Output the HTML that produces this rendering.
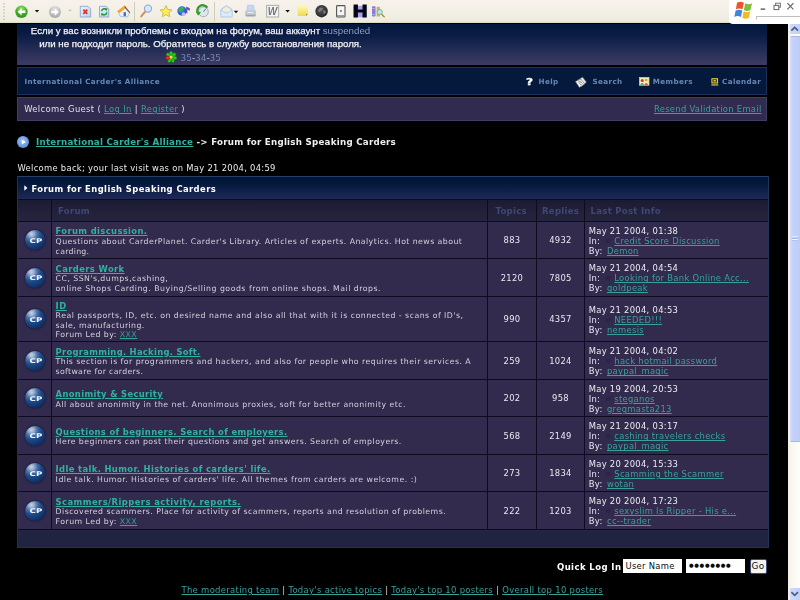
<!DOCTYPE html>
<html><head><meta charset="utf-8"><title>International Carder's Alliance</title>
<style>
html,body{margin:0;padding:0;background:#000;}
body{width:800px;height:600px;position:relative;overflow:hidden;font-family:"DejaVu Sans","Liberation Sans",sans-serif;font-size:8.4px;letter-spacing:0.3px;color:#e6e6ee;}
div,span,a,svg{position:absolute;white-space:nowrap;}
.i{position:static;}
a{color:#38a29a;text-decoration:underline;}
#tbi,#hdr>*,#nav>*,#wel>*,#crumb,#wb,#ttl>*,.ht,.t,.d,.n,.l,.cp,#ql,#foot,.bl{filter:blur(0.32px);}
/* toolbar */
#tb{left:0;top:0;width:800px;height:23px;background:linear-gradient(#f7f1eb,#f4f0e7 40%,#f0efe3 72%,#ecebdc);border-bottom:1px solid #dddccb;box-sizing:border-box;}
#tbw{left:729px;top:0;width:71px;height:24px;background:#fff;border-bottom-left-radius:4px;}
/* header */
#hdr{left:17px;top:24px;width:750px;height:41px;background:linear-gradient(#04173b,#0b1c45 28%,#1b2850 52%,#2b3058 72%,#35365f 87%,#3b3b63);}
#hdr div{left:0;width:367px;letter-spacing:0;text-align:center;font-family:"Liberation Sans",sans-serif;font-size:9.7px;color:#f4f4f8;-webkit-text-stroke:0.25px #f4f4f8;}
#nav{left:17px;top:67px;width:748px;height:26px;background:#04193c;border:1px solid #1a3058;}
#wel{left:17px;top:97px;width:748px;height:21.5px;background:#302b4f;border:1px solid #413d64;}
.nb{font-weight:bold;font-size:7.2px;letter-spacing:0.38px;color:#6a86b2;top:9.4px;}
/* table */
#tbl{left:17px;top:176px;width:752px;height:372px;background:#0c0b20;box-shadow:inset 0 0 0 1px #1d3459;}
#ttl{left:1px;top:0;width:750px;height:23px;background:linear-gradient(#001737 0,#021838 20%,#0c1c44 50%,#18244e 80%,#1d2a56 100%);border-top:1px solid #2a3c68;box-sizing:border-box;}
.c{background:#322b4d;}
.h{background:linear-gradient(#1a1c33,#231f39 50%,#24253f);}
#strip{background:#202440;}
.ht{font-weight:bold;color:#3d4875;font-size:8.6px;letter-spacing:0.25px;}
.t{font-weight:bold;font-size:8.4px;letter-spacing:0.37px;color:#2fb3a0;left:56px;}
.t a{position:static;color:#2fb3a0;}
.d{font-size:7.8px;letter-spacing:0.44px;color:#d2d2dc;left:56px;}
.d a{position:static;}
.n{font-size:8.4px;letter-spacing:0.3px;color:#e8e8f0;text-align:center;}
.l{left:588.5px;font-size:8.4px;letter-spacing:0.3px;color:#ececf2;}
.l a{position:static;}
.l i{font-style:normal;color:#4a4578;}
.cp{width:20px;height:20px;border-radius:50%;background:radial-gradient(circle at 32% 20%,#c6d2e6 0,#9db1d1 12%,#4d74aa 27%,#1d4a88 45%,#133b75 63%,#0b2858 84%,#081c44 100%);box-shadow:0 0 1.5px 0.5px #16183a;}
.cp span{left:1px;top:6.3px;width:20px;text-align:center;font-family:"DejaVu Sans",sans-serif;font-weight:bold;font-size:6.4px;line-height:8px;color:#f4f6fa;letter-spacing:0;transform:scaleX(1.36);}
</style></head><body>
<div id="tb"></div>
<div id="tbw"></div>
<svg id="tbi" style="left:0;top:0" width="800" height="24" viewBox="0 0 800 24">
<defs>
<radialGradient id="gG" cx="0.5" cy="0.25" r="0.8"><stop offset="0" stop-color="#9be07a"/><stop offset="0.5" stop-color="#45b02c"/><stop offset="1" stop-color="#2c8a1c"/></radialGradient>
<radialGradient id="gF" cx="0.5" cy="0.25" r="0.8"><stop offset="0" stop-color="#e4e4e4"/><stop offset="0.6" stop-color="#bcbcbc"/><stop offset="1" stop-color="#a4a4a4"/></radialGradient>
<linearGradient id="gP" x1="0" y1="0" x2="1" y2="1"><stop offset="0" stop-color="#eef5fe"/><stop offset="1" stop-color="#b9d0f2"/></linearGradient>
<linearGradient id="gY" x1="0" y1="0" x2="0" y2="1"><stop offset="0" stop-color="#fdf8b0"/><stop offset="1" stop-color="#f1d84e"/></linearGradient>
<radialGradient id="gB" cx="0.4" cy="0.35" r="0.7"><stop offset="0" stop-color="#4aa0f0"/><stop offset="1" stop-color="#1448b0"/></radialGradient>
<radialGradient id="gD" cx="0.45" cy="0.4" r="0.7"><stop offset="0" stop-color="#5a5a5a"/><stop offset="1" stop-color="#1c1c1c"/></radialGradient>
</defs>
<!-- gripper -->
<g fill="#b9b6a8"><rect x="3.3" y="3.2" width="1.4" height="1.2"/><rect x="3.3" y="6.3" width="1.4" height="1.2"/><rect x="3.3" y="9.4" width="1.4" height="1.2"/><rect x="3.3" y="12.5" width="1.4" height="1.2"/><rect x="3.3" y="15.6" width="1.4" height="1.2"/><rect x="3.3" y="18.7" width="1.4" height="1.2"/></g>
<!-- back -->
<circle cx="21.5" cy="11.8" r="6.2" fill="url(#gG)"/>
<path d="M17.6 11.8 L21.6 8 L21.6 10.5 L25.4 10.5 L25.4 13.1 L21.6 13.1 L21.6 15.6 Z" fill="#fff"/>
<path d="M34.8 10 L39.2 10 L37 12.6 Z" fill="#111"/>
<!-- forward -->
<circle cx="55" cy="12" r="6" fill="url(#gF)"/>
<path d="M58.8 12 L54.8 8.3 L54.8 10.8 L51.2 10.8 L51.2 13.2 L54.8 13.2 L54.8 15.7 Z" fill="#fff"/>
<path d="M68.4 9.8 L71.6 9.8 L70 11.6 Z" fill="#b4b2aa"/>
<!-- stop -->
<path d="M80.3 6.3 L88 6.3 L90.7 9 L90.7 17 L80.3 17 Z" fill="url(#gP)" stroke="#8fa6cc" stroke-width="0.9"/>
<path d="M83.3 9.6 L87.3 13.8 M87.3 9.6 L83.3 13.8" stroke="#d93a22" stroke-width="1.9" fill="none"/>
<!-- refresh -->
<path d="M99.5 6.3 L106.2 6.3 L108.8 9 L108.8 17 L99.5 17 Z" fill="url(#gP)" stroke="#8fa6cc" stroke-width="0.9"/>
<path d="M101.6 11.2 A2.7 2.7 0 0 1 106 9.4" fill="none" stroke="#1f9a30" stroke-width="1.5"/>
<path d="M104.8 8.2 L107.6 8.4 L106.6 11.2 Z" fill="#1f9a30"/>
<path d="M106.8 12.4 A2.7 2.7 0 0 1 102.4 14.2" fill="none" stroke="#1f9a30" stroke-width="1.5"/>
<path d="M103.6 15.4 L100.8 15.2 L101.8 12.4 Z" fill="#1f9a30"/>
<!-- home -->
<path d="M118.3 11.5 L120 16.3 L127.6 16.9 L129.6 12.6 L125.4 7.8 Z" fill="#e9f0fa" stroke="#9cb4d8" stroke-width="0.7"/>
<path d="M117 11.2 L124.6 5.4 L126.3 7.6 L119.2 13.2 Z" fill="#f3a534"/>
<path d="M124.6 5.4 L130.4 12.4 L129.2 13 L124.8 7.8 Z" fill="#8a5a3a"/>
<rect x="123.6" y="12.2" width="2.3" height="4" fill="#4a68b8"/>
<!-- sep -->
<rect x="134" y="2" width="1" height="19.5" fill="#d0cdbf"/>
<!-- search -->
<path d="M145.4 11.4 L141.2 16.4" stroke="#d98a4e" stroke-width="1.9" stroke-linecap="round"/>
<circle cx="148" cy="8.6" r="3.6" fill="#d6e8fb" stroke="#8daad2" stroke-width="1.1"/>
<!-- star -->
<path d="M166 5.6 L167.8 9.4 L172 9.9 L168.9 12.7 L169.8 16.8 L166 14.7 L162.2 16.8 L163.1 12.7 L160 9.9 L164.2 9.4 Z" fill="#f8ea62" stroke="#d2b23a" stroke-width="0.8"/>
<!-- media -->
<path d="M186.2 12.8 L186.2 6.4 L189.8 8.2 L189.8 10.8 L187.4 9.6 L187.4 13.4 Z" fill="#6a48b4"/>
<circle cx="182" cy="11" r="4.7" fill="url(#gB)"/>
<path d="M179 9 Q181 6.6 183.6 7.2 Q184.4 9.4 182.4 10.6 Q180.6 12.8 179.4 11.6 Z" fill="#38b83a"/>
<circle cx="183.6" cy="14.2" r="1.9" fill="#c9b8f2"/>
<!-- history -->
<circle cx="203.4" cy="11.8" r="4.9" fill="#dfe7f0" stroke="#9aa8b8" stroke-width="0.9"/>
<path d="M203.4 11.8 L206 8.6" stroke="#5a6a88" stroke-width="0.9"/>
<path d="M198.2 13.8 A5.5 5.5 0 0 1 207.4 7.6" fill="none" stroke="#379a2c" stroke-width="2.3"/>
<path d="M196 11.4 L201 12 L198.2 15.8 Z" fill="#379a2c"/>
<!-- sep -->
<rect x="214" y="2" width="1" height="19.5" fill="#d0cdbf"/>
<!-- mail -->
<path d="M221 9.4 L226.4 5.6 L232 9.4 L232 16.8 L221 16.8 Z" fill="#c6dcf8" stroke="#9ab8e2" stroke-width="0.7"/>
<path d="M222.6 9.2 L226.4 6.6 L230.4 9.2 L230.4 11.4 L222.6 11.4 Z" fill="#f6eed2"/>
<path d="M221 10.2 L226.5 13.6 L232 10.2 L232 16.8 L221 16.8 Z" fill="#deebfc" stroke="#a6c2e8" stroke-width="0.5"/>
<path d="M233.8 10.8 L238.2 10.8 L236 13.2 Z" fill="#111"/>
<!-- print -->
<path d="M247.6 5.2 L253.6 5.2 L254.4 10.6 L246.8 10.6 Z" fill="#c2d8f4" stroke="#a4bce0" stroke-width="0.5"/>
<path d="M245.4 10.6 L255.8 10.6 L256.2 14.6 L245 14.6 Z" fill="#c3c7cf"/>
<path d="M245 14.6 L256.2 14.6 L255 16.6 L246.2 16.6 Z" fill="#9ea4ae"/>
<rect x="247.6" y="12" width="5.8" height="1" fill="#eef1f4"/>
<!-- word -->
<rect x="266.6" y="5.4" width="12" height="11.6" fill="#f4f4f4" stroke="#b2b2b2" stroke-width="1.1"/>
<text x="272.6" y="14.8" text-anchor="middle" font-family="Liberation Sans, sans-serif" font-weight="bold" font-style="italic" font-size="10" fill="#777">W</text>
<path d="M285.4 10 L289.8 10 L287.6 12.4 Z" fill="#111"/>
<!-- note -->
<path d="M297.6 6 L308 6 L308 14 L306 16 L297.6 16 Z" fill="url(#gY)"/>
<path d="M308 14 L306 16 L306 14 Z" fill="#b2941e"/>
<!-- dark globe -->
<circle cx="321.6" cy="11.2" r="6.2" fill="url(#gD)"/>
<path d="M318.4 9.4 Q320.6 6.8 323 8 Q322.6 10.4 320.6 11 Q319 12.6 318.2 11.4 Z M323.4 10.4 Q325.6 10 325.8 12.2 Q324.8 14.4 323.4 13.4 Z" fill="#7c7c7c"/>
<!-- pda -->
<rect x="336.6" y="5.6" width="8.4" height="11.4" rx="0.8" fill="#f6f6f6" stroke="#555" stroke-width="1.1"/>
<rect x="337" y="15.2" width="7.6" height="1.4" fill="#888"/>
<rect x="340.2" y="10.2" width="1.4" height="1.6" fill="#444"/>
<!-- H -->
<rect x="353.4" y="5.8" width="11.8" height="11.4" fill="#aaa2e4"/>
<text x="0" y="0" transform="translate(353.1 17.2) scale(1.28 1)" font-family="Liberation Sans, sans-serif" font-weight="bold" font-size="15.6" fill="#06061a" stroke="#06061a" stroke-width="1.1">H</text>
<!-- research -->
<rect x="372" y="6.2" width="3.6" height="10.4" rx="0.8" fill="#8a7ae2"/>
<rect x="372" y="8" width="3.6" height="0.8" fill="#b8aef2"/><rect x="372" y="14" width="3.6" height="0.8" fill="#b8aef2"/>
<rect x="376.6" y="6.8" width="3.4" height="9.8" rx="0.6" fill="#c9b64e"/>
<path d="M381.6 14.2 L384.2 16.8" stroke="#b98a3a" stroke-width="1.5" stroke-linecap="round"/>
<circle cx="379.8" cy="12" r="2.6" fill="#a8ecf2" stroke="#8a9a6a" stroke-width="0.7"/>
<!-- window controls -->
<g transform="translate(735.2 0.4) scale(1.14 1.06)">
<path d="M1.6 2.2 Q4.6 0.4 7.6 2.2 L6.4 8.4 Q3.6 6.8 0.6 8.4 Z" fill="#e8562a"/>
<path d="M8.8 2.8 Q11.8 4.6 14.8 2.8 L13.4 9 Q10.6 10.8 7.6 9 Z" fill="#7bbf3a"/>
<path d="M0.4 9.6 Q3.4 8 6.2 9.6 L5 15.6 Q2.2 14 -0.8 15.6 Z" fill="#3f86d8"/>
<path d="M7.4 10.2 Q10.4 12 13.2 10.2 L12 16.4 Q9.2 18 6.2 16.4 Z" fill="#f4b924"/>
</g>
<rect x="760.6" y="8.4" width="4.6" height="1.5" fill="#666"/>
<rect x="775.6" y="3.2" width="4.8" height="4" fill="none" stroke="#777" stroke-width="1"/>
<rect x="774" y="5.4" width="4.8" height="4.2" fill="#fff" stroke="#666" stroke-width="1"/>
<path d="M787.4 3.2 L793.4 9.4 M793.4 3.2 L787.4 9.4" stroke="#666" stroke-width="1.2"/>
<rect x="756" y="16" width="44" height="0.9" fill="#b8b8b8"/>
<rect x="756" y="16" width="0.9" height="3.4" fill="#b8b8b8"/>
</svg>

<div id="hdr">
<div style="top:1.1px">Если у вас возникли проблемы с входом на форум, ваш аккаунт <span class="i" style="color:#8a9cc0;-webkit-text-stroke:0">suspended</span></div>
<div style="top:13.5px">или не подходит пароль. Обратитесь в службу восстановления пароля.</div>
<span style="left:163.6px;top:29.1px;font-family:'DejaVu Sans',sans-serif;font-size:8.9px;letter-spacing:0;color:#7088b0">35<span class="i" style="color:#c8d0e0">-</span>34<span class="i" style="color:#c8d0e0">-</span>35</span>
<svg style="left:148.4px;top:27.4px" width="12.6" height="12.6" viewBox="0 0 12 12"><g transform="translate(5.8 5.8)"><g fill="#2fc42c" stroke="#0f7a12" stroke-width="0.5"><ellipse cx="0" cy="-3.3" rx="1.7" ry="2.3"/><ellipse cx="0" cy="-3.3" rx="1.7" ry="2.3" transform="rotate(51.4)"/><ellipse cx="0" cy="-3.3" rx="1.7" ry="2.3" transform="rotate(102.8)"/><ellipse cx="0" cy="-3.3" rx="1.7" ry="2.3" transform="rotate(154.3)"/><ellipse cx="0" cy="-3.3" rx="1.7" ry="2.3" transform="rotate(205.7)"/><ellipse cx="0" cy="-3.3" rx="1.7" ry="2.3" transform="rotate(308.6)"/></g><ellipse cx="0" cy="-3.3" rx="1.7" ry="2.3" transform="rotate(257.1)" fill="#e03020" stroke="#801010" stroke-width="0.5"/><circle r="1.5" fill="#f4e23a"/></g></svg>
</div>

<div id="nav">
<span class="nb" style="left:6.5px">International Carder's Alliance</span>
<span class="nb" style="left:520.5px">Help</span>
<span class="nb" style="left:574.5px">Search</span>
<span class="nb" style="left:634.8px">Members</span>
<span class="nb" style="left:704px">Calendar</span>
<span style="left:509.2px;top:8.6px;font-family:'DejaVu Sans',sans-serif;font-weight:bold;font-size:9px;letter-spacing:0;color:#fff;transform:scaleX(1.35);-webkit-text-stroke:0.3px #fff">?</span>
<svg style="left:556px;top:8px" width="14" height="13" viewBox="0 0 14 13"><path d="M3.2 4.4 L8.6 1.2 L12.4 6.2 L7.4 10.4 Z" fill="#e8e8ee" stroke="#777" stroke-width="0.5"/><path d="M1.4 5.4 L7 3.2 L10.6 8 L5.4 11.4 Z" fill="#fafafa" stroke="#666" stroke-width="0.6"/><path d="M4 6.2 L7 5 M4.8 7.6 L8 6.2 M5.8 9 L8.8 7.6" stroke="#555" stroke-width="0.6"/></svg>
<svg style="left:620.6px;top:9.4px" width="11" height="9" viewBox="0 0 11 9"><rect x="0.4" y="0.4" width="9.6" height="7.8" fill="#f2eeb4" stroke="#c8cc8a" stroke-width="0.8"/><circle cx="3.2" cy="3.4" r="1.5" fill="#d83a2a"/><path d="M1.2 7.8 Q3.2 4.4 5.2 7.8 Z" fill="#2a9a96"/><circle cx="7.2" cy="3" r="1.3" fill="#d8a038"/><path d="M5.4 7.8 Q7.2 4 9.2 7.8 Z" fill="#d83a2a"/></svg>
<svg style="left:692.6px;top:9.6px" width="8" height="8.4" viewBox="0 0 9 9"><rect x="1" y="0.6" width="6.4" height="4.8" fill="#3a3a20" stroke="#f0dc4a" stroke-width="1.1"/><rect x="3" y="2.2" width="2.4" height="1.6" fill="#f0dc4a"/><rect x="0.4" y="7" width="7.8" height="1.2" fill="#f0dc4a"/></svg>
</div>

<div id="wel">
<span style="left:6.2px;top:6.1px;letter-spacing:0.36px;color:#e0e0ea">Welcome Guest ( <a class="i" href="#">Log In</a> | <a class="i" href="#">Register</a> )</span>
<a href="#" style="left:636px;top:6.1px">Resend Validation Email</a>
</div>

<div id="crumb" style="left:36px;top:136.9px;font-weight:bold;font-size:8.7px;letter-spacing:0.25px;color:#f0f0f0"><a class="i" href="#" style="color:#2fb3a0">International Carder's Alliance</a> -&gt; Forum for English Speaking Carders</div>
<div style="left:17px;top:135.5px;width:12px;height:12px;border-radius:50%;background:radial-gradient(circle at 45% 40%,#9fc0f2,#6a98dc 60%,#4a78c4)"><svg style="left:3.6px;top:3px" width="6" height="6" viewBox="0 0 6 6"><path d="M0.8 0.4 L5 3 L0.8 5.6 Z" fill="#fff"/></svg></div>

<div id="wb" style="left:17.5px;top:162.9px;color:#ececf0">Welcome back; your last visit was on May 21 2004, 04:59</div>
<div id="tbl">
<div id="ttl"><svg style="left:5.6px;top:8.4px" width="4" height="6" viewBox="0 0 4 6"><path d="M0.3 0.2 L3.4 3 L0.3 5.8 Z" fill="#fff"/></svg><span style="left:13.5px;top:6.9px;font-weight:bold;font-size:8.4px;letter-spacing:0.43px;color:#fff">Forum for English Speaking Carders</span></div>
<div class="h" style="left:1px;top:24px;width:33px;height:21px"></div><div class="h" style="left:35px;top:24px;width:435px;height:21px"><span class="ht" style="left:6px;top:5.5px">Forum</span></div><div class="h" style="left:471px;top:24px;width:48px;height:21px"><span class="ht" style="left:7.5px;top:5.5px">Topics</span></div><div class="h" style="left:520px;top:24px;width:47px;height:21px"><span class="ht" style="left:5px;top:5.5px">Replies</span></div><div class="h" style="left:568px;top:24px;width:183px;height:21px"><span class="ht" style="left:5.5px;top:5.5px">Last Post Info</span></div>
<div class="c" style="left:1px;top:46px;width:33px;height:36px"></div><div class="c" style="left:35px;top:46px;width:435px;height:36px"></div><div class="c" style="left:471px;top:46px;width:48px;height:36px"></div><div class="c" style="left:520px;top:46px;width:47px;height:36px"></div><div class="c" style="left:568px;top:46px;width:183px;height:36px"></div><div class="cp" style="left:7.5px;top:54.3px"><span>CP</span></div><span class="t" style="left:38.6px;top:50.35px;line-height:10.6px;letter-spacing:0.377px"><a href="#">Forum discussion.</a></span><span class="d" style="left:38.6px;top:60.95px;line-height:9.55px;letter-spacing:0.437px">Questions about CarderPlanet. Carder's Library. Articles of experts. Analytics. Hot news about</span><span class="d" style="left:38.6px;top:70.5px;line-height:9.55px;letter-spacing:0.259px">carding.</span><span class="n" style="left:471px;width:48px;top:59.4px;line-height:11px">883</span><span class="n" style="left:520px;width:47px;top:59.4px;line-height:11px">4932</span><span class="l" style="left:571.7px;top:49.75px;line-height:10.1px">May 21 2004, 01:38</span><span class="l" style="left:571.7px;top:59.85px;line-height:10.1px">In:</span><span class="l" style="left:587.8px;top:58.65px;line-height:10.1px;font-size:10.5px;font-weight:bold;color:#281e54">&raquo;</span><span class="l" style="left:597.3px;top:59.85px;line-height:10.1px"><a href="#">Credit Score Discussion</a></span><span class="l" style="left:571.7px;top:69.95px;line-height:10.1px">By:</span><span class="l" style="left:590px;top:69.95px;line-height:10.1px"><a href="#">Demon</a></span>
<div class="c" style="left:1px;top:83px;width:33px;height:37px"></div><div class="c" style="left:35px;top:83px;width:435px;height:37px"></div><div class="c" style="left:471px;top:83px;width:48px;height:37px"></div><div class="c" style="left:520px;top:83px;width:47px;height:37px"></div><div class="c" style="left:568px;top:83px;width:183px;height:37px"></div><div class="cp" style="left:7.5px;top:91.8px"><span>CP</span></div><span class="t" style="left:38.6px;top:87.85px;line-height:10.6px;letter-spacing:0.414px"><a href="#">Carders Work</a></span><span class="d" style="left:38.6px;top:98.45px;line-height:9.55px;letter-spacing:0.452px">CC, SSN's,dumps,cashing,</span><span class="d" style="left:38.6px;top:108px;line-height:9.55px;letter-spacing:0.499px">online Shops Carding. Buying/Selling goods from online shops. Mail drops.</span><span class="n" style="left:471px;width:48px;top:96.9px;line-height:11px">2120</span><span class="n" style="left:520px;width:47px;top:96.9px;line-height:11px">7805</span><span class="l" style="left:571.7px;top:87.25px;line-height:10.1px">May 21 2004, 04:54</span><span class="l" style="left:571.7px;top:97.35px;line-height:10.1px">In:</span><span class="l" style="left:587.8px;top:96.15px;line-height:10.1px;font-size:10.5px;font-weight:bold;color:#281e54">&raquo;</span><span class="l" style="left:597.3px;top:97.35px;line-height:10.1px"><a href="#">Looking for Bank Online Acc...</a></span><span class="l" style="left:571.7px;top:107.45px;line-height:10.1px">By:</span><span class="l" style="left:590px;top:107.45px;line-height:10.1px"><a href="#">goldpeak</a></span>
<div class="c" style="left:1px;top:121px;width:33px;height:44px"></div><div class="c" style="left:35px;top:121px;width:435px;height:44px"></div><div class="c" style="left:471px;top:121px;width:48px;height:44px"></div><div class="c" style="left:520px;top:121px;width:47px;height:44px"></div><div class="c" style="left:568px;top:121px;width:183px;height:44px"></div><div class="cp" style="left:7.5px;top:133.3px"><span>CP</span></div><span class="t" style="left:38.6px;top:124.575px;line-height:10.6px;letter-spacing:0.56px"><a href="#">ID</a></span><span class="d" style="left:38.6px;top:135.175px;line-height:9.55px;letter-spacing:0.484px">Real passports, ID, etc. on desired name and also all that with it is connected - scans of ID's,</span><span class="d" style="left:38.6px;top:144.725px;line-height:9.55px;letter-spacing:0.431px">sale, manufacturing.</span><span class="d" style="left:38.6px;top:154.275px;line-height:9.55px;letter-spacing:0.460px">Forum Led by: <a href="#">XXX</a></span><span class="n" style="left:471px;width:48px;top:138.4px;line-height:11px">990</span><span class="n" style="left:520px;width:47px;top:138.4px;line-height:11px">4357</span><span class="l" style="left:571.7px;top:128.75px;line-height:10.1px">May 21 2004, 04:53</span><span class="l" style="left:571.7px;top:138.85px;line-height:10.1px">In:</span><span class="l" style="left:587.8px;top:137.65px;line-height:10.1px;font-size:10.5px;font-weight:bold;color:#281e54">&raquo;</span><span class="l" style="left:597.3px;top:138.85px;line-height:10.1px"><a href="#">NEEDED!!!</a></span><span class="l" style="left:571.7px;top:148.95px;line-height:10.1px">By:</span><span class="l" style="left:590px;top:148.95px;line-height:10.1px"><a href="#">nemesis</a></span>
<div class="c" style="left:1px;top:166px;width:33px;height:37px"></div><div class="c" style="left:35px;top:166px;width:435px;height:37px"></div><div class="c" style="left:471px;top:166px;width:48px;height:37px"></div><div class="c" style="left:520px;top:166px;width:47px;height:37px"></div><div class="c" style="left:568px;top:166px;width:183px;height:37px"></div><div class="cp" style="left:7.5px;top:174.8px"><span>CP</span></div><span class="t" style="left:38.6px;top:170.85px;line-height:10.6px;letter-spacing:0.295px"><a href="#">Programming. Hacking. Soft.</a></span><span class="d" style="left:38.6px;top:181.45px;line-height:9.55px;letter-spacing:0.458px">This section is for programmers and hackers, and also for people who requires their services. A</span><span class="d" style="left:38.6px;top:191px;line-height:9.55px;letter-spacing:0.329px">software for carders.</span><span class="n" style="left:471px;width:48px;top:179.9px;line-height:11px">259</span><span class="n" style="left:520px;width:47px;top:179.9px;line-height:11px">1024</span><span class="l" style="left:571.7px;top:170.25px;line-height:10.1px">May 21 2004, 04:02</span><span class="l" style="left:571.7px;top:180.35px;line-height:10.1px">In:</span><span class="l" style="left:587.8px;top:179.15px;line-height:10.1px;font-size:10.5px;font-weight:bold;color:#281e54">&raquo;</span><span class="l" style="left:597.3px;top:180.35px;line-height:10.1px"><a href="#">hack hotmail password</a></span><span class="l" style="left:571.7px;top:190.45px;line-height:10.1px">By:</span><span class="l" style="left:590px;top:190.45px;line-height:10.1px"><a href="#">paypal_magic</a></span>
<div class="c" style="left:1px;top:204px;width:33px;height:36px"></div><div class="c" style="left:35px;top:204px;width:435px;height:36px"></div><div class="c" style="left:471px;top:204px;width:48px;height:36px"></div><div class="c" style="left:520px;top:204px;width:47px;height:36px"></div><div class="c" style="left:568px;top:204px;width:183px;height:36px"></div><div class="cp" style="left:7.5px;top:212.3px"><span>CP</span></div><span class="t" style="left:38.6px;top:213.125px;line-height:10.6px;letter-spacing:0.353px"><a href="#">Anonimity &amp; Security</a></span><span class="d" style="left:38.6px;top:223.725px;line-height:9.55px;letter-spacing:0.462px">All about anonimity in the net. Anonimous proxies, soft for better anonimity etc.</span><span class="n" style="left:471px;width:48px;top:217.4px;line-height:11px">202</span><span class="n" style="left:520px;width:47px;top:217.4px;line-height:11px">958</span><span class="l" style="left:571.7px;top:207.75px;line-height:10.1px">May 19 2004, 20:53</span><span class="l" style="left:571.7px;top:217.85px;line-height:10.1px">In:</span><span class="l" style="left:587.8px;top:216.65px;line-height:10.1px;font-size:10.5px;font-weight:bold;color:#281e54">&raquo;</span><span class="l" style="left:597.3px;top:217.85px;line-height:10.1px"><a href="#">steganos</a></span><span class="l" style="left:571.7px;top:227.95px;line-height:10.1px">By:</span><span class="l" style="left:590px;top:227.95px;line-height:10.1px"><a href="#">gregmasta213</a></span>
<div class="c" style="left:1px;top:241px;width:33px;height:37px"></div><div class="c" style="left:35px;top:241px;width:435px;height:37px"></div><div class="c" style="left:471px;top:241px;width:48px;height:37px"></div><div class="c" style="left:520px;top:241px;width:47px;height:37px"></div><div class="c" style="left:568px;top:241px;width:183px;height:37px"></div><div class="cp" style="left:7.5px;top:249.8px"><span>CP</span></div><span class="t" style="left:38.6px;top:250.625px;line-height:10.6px;letter-spacing:0.361px"><a href="#">Questions of beginners. Search of employers.</a></span><span class="d" style="left:38.6px;top:261.225px;line-height:9.55px;letter-spacing:0.454px">Here beginners can post their questions and get answers. Search of employers.</span><span class="n" style="left:471px;width:48px;top:254.9px;line-height:11px">568</span><span class="n" style="left:520px;width:47px;top:254.9px;line-height:11px">2149</span><span class="l" style="left:571.7px;top:245.25px;line-height:10.1px">May 21 2004, 03:17</span><span class="l" style="left:571.7px;top:255.35px;line-height:10.1px">In:</span><span class="l" style="left:587.8px;top:254.15px;line-height:10.1px;font-size:10.5px;font-weight:bold;color:#281e54">&raquo;</span><span class="l" style="left:597.3px;top:255.35px;line-height:10.1px"><a href="#">cashing travelers checks</a></span><span class="l" style="left:571.7px;top:265.45px;line-height:10.1px">By:</span><span class="l" style="left:590px;top:265.45px;line-height:10.1px"><a href="#">paypal_magic</a></span>
<div class="c" style="left:1px;top:279px;width:33px;height:36px"></div><div class="c" style="left:35px;top:279px;width:435px;height:36px"></div><div class="c" style="left:471px;top:279px;width:48px;height:36px"></div><div class="c" style="left:520px;top:279px;width:47px;height:36px"></div><div class="c" style="left:568px;top:279px;width:183px;height:36px"></div><div class="cp" style="left:7.5px;top:287.3px"><span>CP</span></div><span class="t" style="left:38.6px;top:288.125px;line-height:10.6px;letter-spacing:0.375px"><a href="#">Idle talk. Humor. Histories of carders' life.</a></span><span class="d" style="left:38.6px;top:298.725px;line-height:9.55px;letter-spacing:0.483px">Idle talk. Humor. Histories of carders' life. All themes from carders are welcome. :)</span><span class="n" style="left:471px;width:48px;top:292.4px;line-height:11px">273</span><span class="n" style="left:520px;width:47px;top:292.4px;line-height:11px">1834</span><span class="l" style="left:571.7px;top:282.75px;line-height:10.1px">May 20 2004, 15:33</span><span class="l" style="left:571.7px;top:292.85px;line-height:10.1px">In:</span><span class="l" style="left:587.8px;top:291.65px;line-height:10.1px;font-size:10.5px;font-weight:bold;color:#281e54">&raquo;</span><span class="l" style="left:597.3px;top:292.85px;line-height:10.1px"><a href="#">Scamming the Scammer</a></span><span class="l" style="left:571.7px;top:302.95px;line-height:10.1px">By:</span><span class="l" style="left:590px;top:302.95px;line-height:10.1px"><a href="#">wotan</a></span>
<div class="c" style="left:1px;top:316px;width:33px;height:37px"></div><div class="c" style="left:35px;top:316px;width:435px;height:37px"></div><div class="c" style="left:471px;top:316px;width:48px;height:37px"></div><div class="c" style="left:520px;top:316px;width:47px;height:37px"></div><div class="c" style="left:568px;top:316px;width:183px;height:37px"></div><div class="cp" style="left:7.5px;top:324.8px"><span>CP</span></div><span class="t" style="left:38.6px;top:320.85px;line-height:10.6px;letter-spacing:0.452px"><a href="#">Scammers/Rippers activity, reports.</a></span><span class="d" style="left:38.6px;top:331.45px;line-height:9.55px;letter-spacing:0.440px">Discovered scammers. Place for activity of scammers, reports and resolution of problems.</span><span class="d" style="left:38.6px;top:341px;line-height:9.55px;letter-spacing:0.460px">Forum Led by: <a href="#">XXX</a></span><span class="n" style="left:471px;width:48px;top:329.9px;line-height:11px">222</span><span class="n" style="left:520px;width:47px;top:329.9px;line-height:11px">1203</span><span class="l" style="left:571.7px;top:320.25px;line-height:10.1px">May 20 2004, 17:23</span><span class="l" style="left:571.7px;top:330.35px;line-height:10.1px">In:</span><span class="l" style="left:587.8px;top:329.15px;line-height:10.1px;font-size:10.5px;font-weight:bold;color:#281e54">&raquo;</span><span class="l" style="left:597.3px;top:330.35px;line-height:10.1px"><a href="#">sexyslim Is Ripper - His e...</a></span><span class="l" style="left:571.7px;top:340.45px;line-height:10.1px">By:</span><span class="l" style="left:590px;top:340.45px;line-height:10.1px"><a href="#">cc--trader</a></span>
<div class="c" id="strip" style="left:1px;top:354px;width:750px;height:17px"></div></div>

<div id="ql" style="left:557px;top:561.5px;font-weight:bold;font-size:8.5px;letter-spacing:0.42px;color:#fff">Quick Log In</div>
<div style="left:623px;top:559px;width:59px;height:14px;background:#fff;color:#0c0c0c;font-size:8.4px;line-height:14px;"><span class="i" style="margin-left:2.5px">User Name</span></div>
<div style="left:686px;top:559px;width:59px;height:14px;background:#fff;color:#0a0a0a;font-size:5.3px;line-height:13.5px;letter-spacing:0.68px"><span class="i" style="margin-left:3px">&#9679;&#9679;&#9679;&#9679;&#9679;&#9679;&#9679;&#9679;</span></div>
<div style="left:749.5px;top:559px;width:17px;height:15px;background:#f4f3ee;border:1px solid #3c4a7a;border-radius:2px;box-sizing:border-box;color:#111;font-size:8.9px;line-height:13px;text-align:center">Go</div>
<div id="foot" style="left:181.5px;top:585px;font-size:8.46px;color:#d8d8e0"><a class="i" href="#">The moderating team</a> | <a class="i" href="#">Today's active topics</a> | <a class="i" href="#">Today's top 10 posters</a> | <a class="i" href="#">Overall top 10 posters</a></div>
<div id="sb" style="left:788px;top:24px;width:12px;height:576px;background:linear-gradient(90deg,#f4f0e6,#faf8f2 5px,#fefefc)">
<div style="left:2px;top:0;width:10px;height:10px;background:linear-gradient(90deg,#cfdafb,#c1cff8);border-top-left-radius:1px"></div>
<svg style="left:2px;top:0" width="10" height="10" viewBox="0 0 10 10"><path d="M1.4 6.6 L4.7 3.4 L8 6.6" fill="none" stroke="#4a5f88" stroke-width="1.7"/></svg>
<div style="left:2px;top:11.5px;width:10px;height:406.5px;background:linear-gradient(90deg,#d3ddfc,#c4d2fa 3px,#bdccf8);border-top:1px solid #a9b9e6;border-bottom:1px solid #a9b9e6;box-sizing:border-box;border-top-left-radius:1.5px;border-bottom-left-radius:1.5px"></div>
<div style="left:4px;top:212px;width:5.6px;height:1px;background:#dfe7fd"></div>
<div style="left:4px;top:213.9px;width:5.6px;height:1px;background:#a9b9ea"></div>
<div style="left:4px;top:215px;width:5.6px;height:1px;background:#eef3ff"></div>
<div style="left:4px;top:216.2px;width:5.6px;height:1px;background:#b3c2ee"></div>
<div style="left:2px;top:564px;width:10px;height:12px;background:linear-gradient(90deg,#cfdafb,#c1cff8);border-top-left-radius:1px"></div>
<svg style="left:2px;top:564px" width="10" height="12" viewBox="0 0 10 12"><path d="M1.4 4.2 L4.7 7.4 L8 4.2" fill="none" stroke="#4a5f88" stroke-width="1.7"/></svg>
</div>
</body></html>
